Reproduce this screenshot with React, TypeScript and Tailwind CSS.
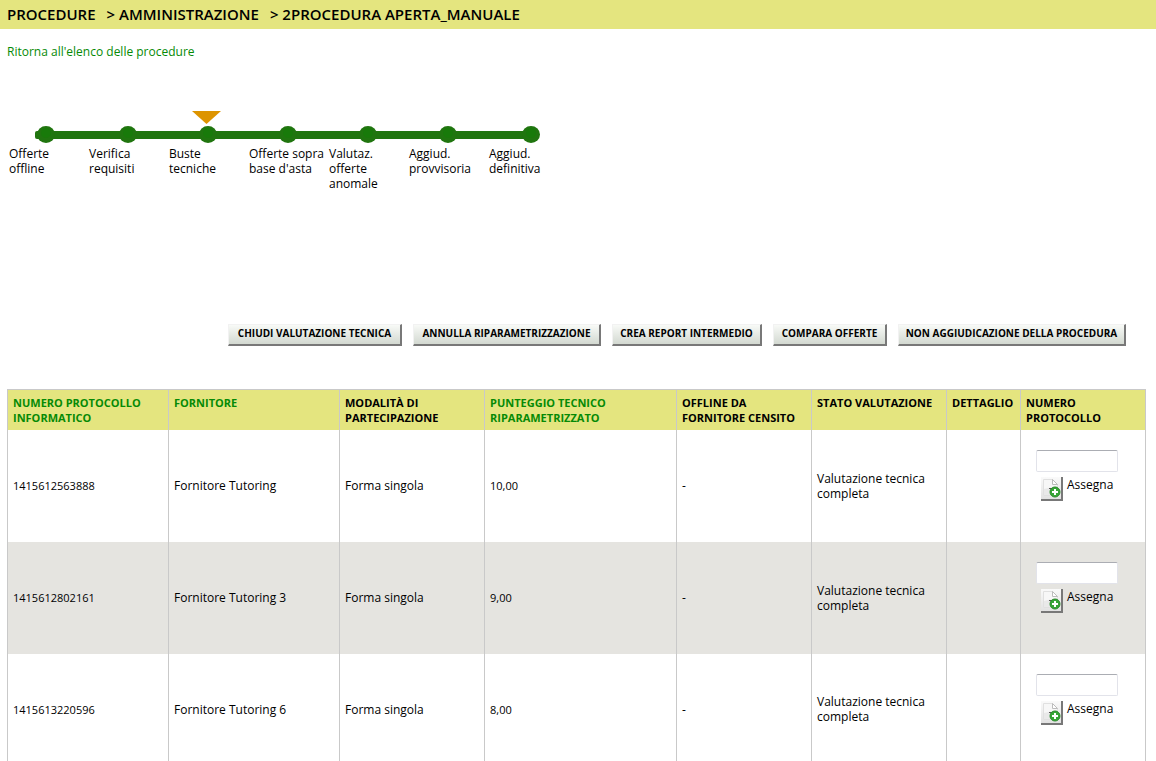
import React from 'react';

// ---------------- Types ----------------
interface Supplier {
    protocol: string;
    name: string;
    mode: string;
    score: string;
    offline: string;
    status: string;
}

interface Column {
    label: string;
    sortable?: boolean;
    width: string;
}

// ---------------- Data ----------------
const steps = [
    'Offerte offline',
    'Verifica requisiti',
    'Buste tecniche',
    'Offerte sopra base d\'asta',
    'Valutaz. offerte anomale',
    'Aggiud. provvisoria',
    'Aggiud. definitiva',
];

const stepDots = [11, 93, 173, 253, 333, 413, 496];

const actions = [
    { label: 'CHIUDI VALUTAZIONE TECNICA', width: 'min-w-[174px]' },
    { label: 'ANNULLA RIPARAMETRIZZAZIONE', width: 'min-w-[188px]' },
    { label: 'CREA REPORT INTERMEDIO', width: 'min-w-[150px]' },
    { label: 'COMPARA OFFERTE', width: 'min-w-[114px]' },
    { label: 'NON AGGIUDICAZIONE DELLA PROCEDURA', width: 'min-w-[228px]' },
];

const columns: Column[] = [
    { label: 'NUMERO PROTOCOLLO INFORMATICO', sortable: true, width: 'w-[161px]' },
    { label: 'FORNITORE', sortable: true, width: 'w-[171px]' },
    { label: 'MODALITÀ DI PARTECIPAZIONE', width: 'w-[145px]' },
    { label: 'PUNTEGGIO TECNICO RIPARAMETRIZZATO', sortable: true, width: 'w-[192px]' },
    { label: 'OFFLINE DA FORNITORE CENSITO', width: 'w-[135px]' },
    { label: 'STATO VALUTAZIONE', width: 'w-[135px]' },
    { label: 'DETTAGLIO', width: 'w-[74px]' },
    { label: 'NUMERO PROTOCOLLO', width: 'w-[125px]' },
];

const suppliers: Supplier[] = [
    { protocol: '1415612563888', name: 'Fornitore Tutoring', mode: 'Forma singola', score: '10,00', offline: '-', status: 'Valutazione tecnica completa' },
    { protocol: '1415612802161', name: 'Fornitore Tutoring 3', mode: 'Forma singola', score: '9,00', offline: '-', status: 'Valutazione tecnica completa' },
    { protocol: '1415613220596', name: 'Fornitore Tutoring 6', mode: 'Forma singola', score: '8,00', offline: '-', status: 'Valutazione tecnica completa' },
];

// ---------------- Icons ----------------
const PageAddIcon = () => (
    <svg width="20" height="20" viewBox="0 0 20 20" aria-hidden="true">
        <path d="M2.5 1.5h9l5 5v11h-14z" fill="#f7f7f7" stroke="#e0e0e0" />
        <path d="M3 11l13-3v9H3z" fill="#e9e9e9" />
        <path d="M11.5 1.5v5h5z" fill="#fff" stroke="#bcbcbc" />
        <path d="M8 10.5h3" stroke="#555" />
        <circle cx="14" cy="14" r="5" fill="#36a536" stroke="#2a8c2a" />
        <path d="M14 11v6M11 14h6" stroke="#fff" strokeWidth="2" />
    </svg>
);

// ---------------- Progress ----------------
const Progress = () => (
    <div className="mt-[52px]">
        <svg className="ml-[28px]" width="506" height="33" viewBox="0 0 506 33" aria-hidden="true">
            <path d="M157 0h29L171.5 13z" fill="#dd9400" />
            <rect x="0" y="20" width="500" height="8" rx="2" fill="#20750f" />
            {stepDots.map((x) => (
                <g key={x}>
                    <ellipse cx={x} cy="23.5" rx="9" ry="8.5" fill="#20750f" />
                    <circle cx={x} cy="22" r="5" fill="#187a0a" />
                </g>
            ))}
        </svg>
        <ol className="flex ml-[2px] h-[180px] leading-[15px]">
            {steps.map((step) => (
                <li key={step} className="w-20 pt-[2px] pr-1">{step}</li>
            ))}
        </ol>
    </div>
);

// ---------------- Component ----------------
const App: React.FC = () => {
    return (
        <div className="bg-white text-black text-[12px] leading-[15px] font-['Open_Sans',sans-serif]">
            {/* Breadcrumb */}
            <h1 className="h-[29px] px-[7px] flex items-center gap-[11px] bg-[#e4e57f] text-[15px] font-semibold">
                <span>PROCEDURE</span>
                <span>&gt; AMMINISTRAZIONE</span>
                <span>&gt; 2PROCEDURA APERTA_MANUALE</span>
            </h1>

            <main className="pl-[7px] pr-[10px] pt-[15px]">
                <a href="#" className="block w-fit text-[#068a06]">Ritorna all'elenco delle procedure</a>

                <Progress />

                {/* Actions */}
                <div className="flex justify-end gap-[11px] pr-5">
                    {actions.map((action) => (
                        <button
                            key={action.label}
                            type="button"
                            className={`${action.width} h-[22px] pb-[2px] whitespace-nowrap border-t border-l border-r-2 border-b-2 border-t-[#f2f2f2] border-l-[#f2f2f2] border-r-[#787878] border-b-[#787878] bg-linear-to-b from-[#f8faf7] to-[#d3d9d1] text-[10px] font-bold leading-[15px]`}
                        >
                            {action.label}
                        </button>
                    ))}
                </div>

                {/* Suppliers */}
                <table className="mt-[43px] w-full table-fixed border-collapse border border-[#c9c9c9]">
                    <thead>
                        <tr className="h-10 bg-[#e4e57f]">
                            {columns.map((column) => (
                                <th
                                    key={column.label}
                                    className={`${column.width} border-x border-[#c9c9c9] pl-[5px] pt-[5px] text-left align-top text-[11px] leading-[15px] font-bold`}
                                >
                                    {column.sortable ? (
                                        <a href="#" className="block text-[#068a06]">{column.label}</a>
                                    ) : (
                                        column.label
                                    )}
                                </th>
                            ))}
                        </tr>
                    </thead>
                    <tbody>
                        {suppliers.map((supplier) => (
                            <tr key={supplier.protocol} className="h-28 even:bg-[#e5e4e0] [&>td]:border-x [&>td]:border-[#c9c9c9] [&>td]:pl-[5px]">
                                <td className="text-[11px]">{supplier.protocol}</td>
                                <td>{supplier.name}</td>
                                <td>{supplier.mode}</td>
                                <td className="text-[11px]">{supplier.score}</td>
                                <td>{supplier.offline}</td>
                                <td>{supplier.status}</td>
                                <td />
                                <td className="align-top">
                                    <div className="pl-[10px] pt-5">
                                        <input
                                            type="text"
                                            aria-label={`Numero protocollo ${supplier.name}`}
                                            className="block h-[22px] w-[82px] rounded-[2px] border border-[#e2e3ea] border-t-[#abadb3] bg-white px-1"
                                        />
                                        <div className="flex gap-1 pl-[5px] pt-[5px]">
                                            <button
                                                type="button"
                                                id={`assign-${supplier.protocol}`}
                                                aria-label="Assegna"
                                                className="flex h-6 w-[22px] items-center justify-center border-r-2 border-b-2 border-[#787878] bg-linear-to-b from-[#fafafa] to-[#e2e2e2]"
                                            >
                                                <PageAddIcon />
                                            </button>
                                            <label htmlFor={`assign-${supplier.protocol}`}>Assegna</label>
                                        </div>
                                    </div>
                                </td>
                            </tr>
                        ))}
                    </tbody>
                </table>
            </main>
        </div>
    );
};

export default App;
